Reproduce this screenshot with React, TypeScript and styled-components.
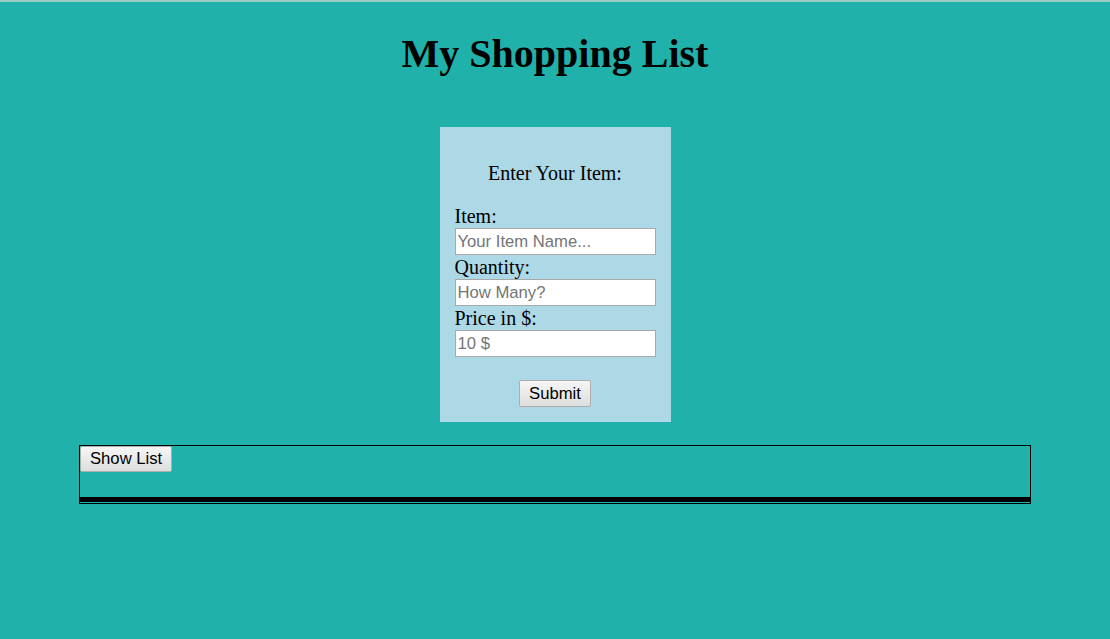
import React from "react";
import styled, { createGlobalStyle } from "styled-components";

const Global = createGlobalStyle`
  html, body { margin: 0; padding: 0; }
  body {
    background: #20b2aa;
    font-family: "Liberation Serif", "Times New Roman", serif;
    color: #000;
    min-height: 639px;
  }
`;

const Page = styled.div`
  border-top: 2px solid #9ccac6;
  display: flex;
  flex-direction: column;
  align-items: center;
  padding-top: 29px;
`;

const Title = styled.h1`
  margin: 0 0 50px;
  font-size: 40px;
  font-weight: bold;
  line-height: 46px;
  text-align: center;
`;

const Card = styled.form`
  width: 201px;
  padding: 35px 15px 15px;
  background: #add8e6;
  display: flex;
  flex-direction: column;
`;

const Heading = styled.p`
  margin: 0 0 20px;
  text-align: center;
  font-size: 20px;
  line-height: 23px;
`;

const Label = styled.label`
  display: block;
  font-size: 20px;
  line-height: 23px;
`;

const Input = styled.input`
  display: block;
  box-sizing: border-box;
  width: 201px;
  height: 27px;
  margin: 0 0 1px;
  padding: 0 2px;
  border: 1px solid #a9a9a9;
  background: #fff;
  font-family: "Liberation Sans", Arial, sans-serif;
  font-size: 16.67px;
  &::placeholder { color: #757575; }
`;

const Actions = styled.div`
  display: flex;
  justify-content: center;
  margin-top: 22px;
`;

const Button = styled.button`
  box-sizing: border-box;
  height: 27px;
  padding: 0 9px;
  border: 1px solid #adadad;
  border-radius: 2px;
  background: linear-gradient(#f6f6f6, #dedede);
  font-family: "Liberation Sans", Arial, sans-serif;
  font-size: 16.67px;
  color: #000;
`;

const ListBox = styled.div`
  box-sizing: border-box;
  width: 952px;
  margin-top: 23px;
  border: 1px solid #000;
  height: 59px;
  display: flex;
  flex-direction: column;
`;

const ListButton = styled(Button)`
  align-self: flex-start;
  height: 26px;
  padding: 0 9px;
`;

const Rule = styled.div`
  margin-top: auto;
  margin-bottom: 1px;
  height: 5px;
  background: #000;
`;

export default function App() {
  return (
    <>
      <Global />
      <Page>
        <Title>My Shopping List</Title>
        <Card onSubmit={(e) => e.preventDefault()}>
          <Heading>Enter Your Item:</Heading>
          <Label htmlFor="item">Item:</Label>
          <Input id="item" placeholder="Your Item Name..." />
          <Label htmlFor="qty">Quantity:</Label>
          <Input id="qty" placeholder="How Many?" />
          <Label htmlFor="price">Price in $:</Label>
          <Input id="price" placeholder="10 $" />
          <Actions>
            <Button type="submit">Submit</Button>
          </Actions>
        </Card>
        <ListBox>
          <ListButton type="button">Show List</ListButton>
          <Rule />
        </ListBox>
      </Page>
    </>
  );
}
